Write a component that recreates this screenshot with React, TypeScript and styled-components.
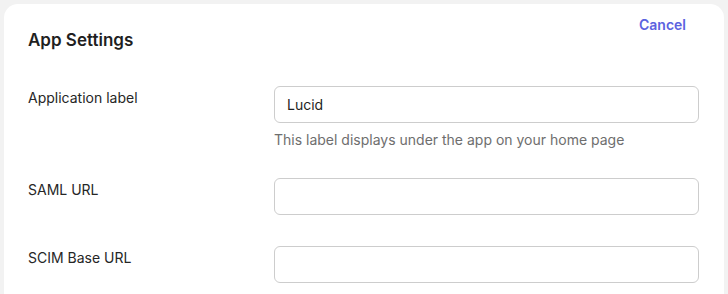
import styled, { createGlobalStyle } from 'styled-components';

const GlobalStyle = createGlobalStyle`
  html, body {
    margin: 0;
    padding: 0;
    background: #f2f2f2;
    font-family: Inter, "Noto Sans", sans-serif;
  }
`;

const Page = styled.div`
  padding: 4px 4px 0 4px;
  height: 294px;
  box-sizing: border-box;
  overflow: hidden;
`;

const Card = styled.div`
  background: #ffffff;
  border-radius: 14px 14px 0 0;
  padding: 11px 38px 24px 24px;
  height: 100%;
  box-sizing: border-box;
`;

const Header = styled.div`
  display: flex;
  justify-content: space-between;
  align-items: flex-start;
`;

const Title = styled.h2`
  margin: 13px 0 0 0;
  font-size: 17px;
  line-height: 24px;
  font-weight: 600;
  color: #1f1f1f;
`;

const CancelButton = styled.button`
  border: none;
  background: none;
  padding: 0;
  font-family: inherit;
  font-size: 14px;
  line-height: 20px;
  font-weight: 600;
  color: #5b62df;
  cursor: pointer;
`;

const Form = styled.div`
  display: flex;
  flex-direction: column;
  gap: 31px;
  margin-top: 34px;
`;

const Row = styled.div`
  display: grid;
  grid-template-columns: 246px 425px;
`;

const Label = styled.label`
  font-size: 14px;
  line-height: 20px;
  color: #262626;
  padding-top: 2px;
`;

const Field = styled.div`
  display: flex;
  flex-direction: column;
  gap: 10px;
`;

const Input = styled.input`
  box-sizing: border-box;
  width: 100%;
  height: 37px;
  border: 1px solid #cdcdcd;
  border-radius: 6px;
  padding: 0 12px;
  font-family: inherit;
  font-size: 14px;
  color: #1f1f1f;
  background: #fff;
  outline: none;
`;

const Hint = styled.div`
  font-size: 14px;
  line-height: 14px;
  color: #6e6e6e;
`;

export default function App() {
  return (
    <Page>
      <GlobalStyle />
      <Card>
        <Header>
          <Title>App Settings</Title>
          <CancelButton>Cancel</CancelButton>
        </Header>
        <Form>
          <Row>
            <Label>Application label</Label>
            <Field>
              <Input defaultValue='Lucid' />
              <Hint>This label displays under the app on your home page</Hint>
            </Field>
          </Row>
          <Row>
            <Label>SAML URL</Label>
            <Field>
              <Input />
            </Field>
          </Row>
          <Row>
            <Label>SCIM Base URL</Label>
            <Field>
              <Input />
            </Field>
          </Row>
        </Form>
      </Card>
    </Page>
  );
}
